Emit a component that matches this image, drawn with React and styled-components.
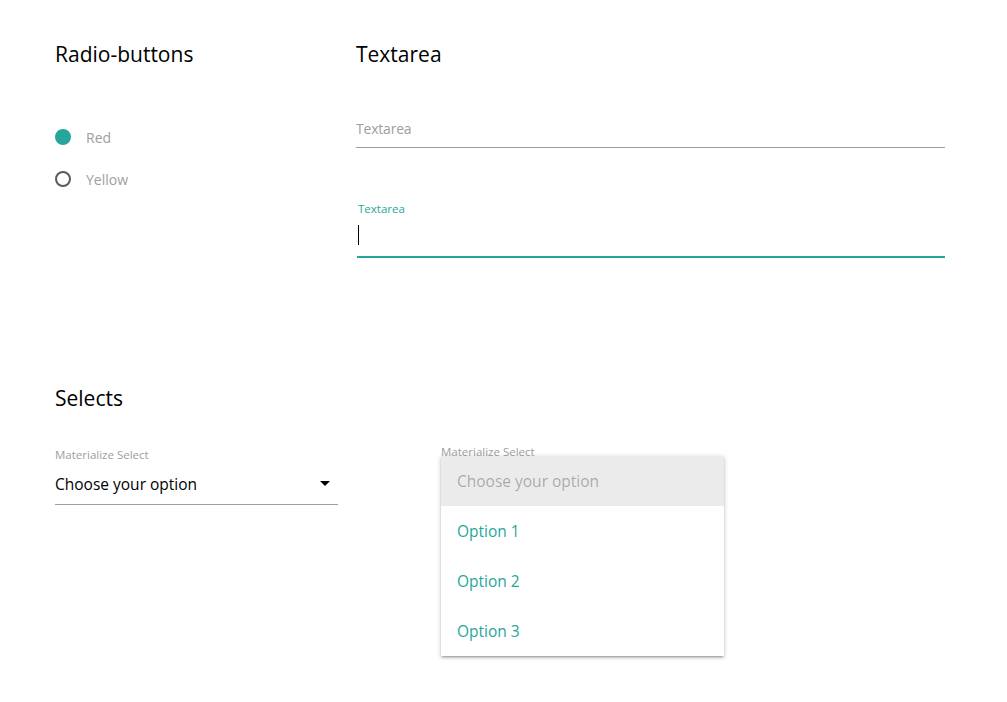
import React from 'react';
import styled, { createGlobalStyle } from 'styled-components';

const TEAL = '#26a69a';

const Global = createGlobalStyle`
  body { margin: 0; background: #fff; font-family: "Open Sans", "Noto Sans", sans-serif; color: #000; }
`;

const Page = styled.div`
  padding: 39px 0 0 55px;
  min-height: 702px;
  box-sizing: border-box;
`;

const TopRow = styled.div`
  display: flex;
  gap: 16px;
`;

const Column = styled.section`
  flex: none;
  width: ${(p) => p.$w}px;
`;

const Heading = styled.h2`
  margin: 0;
  font-size: 21px;
  font-weight: 400;
  line-height: 30px;
  color: #000;
`;

const RadioList = styled.div`
  display: flex;
  flex-direction: column;
  gap: 20px;
  margin-top: 57px;
`;

const RadioRow = styled.label`
  display: flex;
  align-items: center;
  gap: 15px;
  font-size: 14px;
  color: #9e9e9e;
  height: 22px;
`;

const Dot = styled.span`
  width: 16px;
  height: 16px;
  box-sizing: border-box;
  border-radius: 50%;
  background: ${(p) => (p.$on ? TEAL : 'transparent')};
  border: 2px solid ${(p) => (p.$on ? TEAL : '#5a5a5a')};
`;

const Field = styled.div`
  margin-top: ${(p) => p.$mt}px;
`;

const PlainArea = styled.div`
  font-size: 14px;
  letter-spacing: -0.2px;
  color: #9e9e9e;
  padding-bottom: 8px;
  border-bottom: 1px solid #9e9e9e;
  line-height: 20px;
`;

const SmallLabel = styled.div`
  font-size: 11.5px;
  line-height: 16px;
  color: ${(p) => p.$c || '#9e9e9e'};
  padding-left: ${(p) => p.$pl || 0}px;
`;

const ActiveArea = styled.div`
  margin-left: 1px;
  height: 41px;
  border-bottom: 2px solid ${TEAL};
  display: flex;
  align-items: flex-start;
  box-sizing: border-box;
`;

const Caret = styled.span`
  margin-left: 1px;
  margin-top: 8px;
  width: 1px;
  height: 20px;
  background: #000;
`;

const SelectsHead = styled.div`
  margin-top: 125px;
`;

const SelectRow = styled.div`
  display: grid;
  grid-template-columns: 283px 283px;
  gap: 103px;
  margin-top: 34px;
`;

const SelectWrap = styled.div`
  position: relative;
  margin-top: ${(p) => p.$mt || 0}px;
`;

const SelectBox = styled.div`
  display: flex;
  align-items: center;
  justify-content: space-between;
  height: 41px;
  font-size: 15.5px;
  color: #000;
  border-bottom: 1px solid #9e9e9e;
`;

const Arrow = styled.svg`
  width: 10px;
  height: 5px;
  margin-right: 8px;
`;

const Dropdown = styled.ul`
  position: absolute;
  top: 12px;
  left: 0;
  width: 283px;
  margin: 0;
  padding: 0;
  list-style: none;
  background: #fff;
  box-shadow: 0 2px 2px 0 rgba(0,0,0,0.14), 0 3px 1px -2px rgba(0,0,0,0.12), 0 1px 5px 0 rgba(0,0,0,0.2);
`;

const Option = styled.li`
  height: 50px;
  display: flex;
  align-items: center;
  padding-left: 16px;
  font-size: 15.5px;
  color: ${(p) => (p.$disabled ? 'rgba(0,0,0,0.3)' : TEAL)};
  background: ${(p) => (p.$disabled ? '#ebebeb' : '#fff')};
`;

export default function App() {
  return (
    <>
      <Global />
      <Page>
        <TopRow>
          <Column $w={285}>
            <Heading>Radio-buttons</Heading>
            <RadioList>
              <RadioRow><Dot $on />Red</RadioRow>
              <RadioRow><Dot />Yellow</RadioRow>
            </RadioList>
          </Column>
          <Column $w={589}>
            <Heading>Textarea</Heading>
            <Field $mt={50}>
              <PlainArea>Textarea</PlainArea>
            </Field>
            <Field $mt={53}>
              <SmallLabel $c={TEAL} $pl={2}>Textarea</SmallLabel>
              <ActiveArea><Caret /></ActiveArea>
            </Field>
          </Column>
        </TopRow>
        <SelectsHead>
          <Heading>Selects</Heading>
        </SelectsHead>
        <SelectRow>
          <SelectWrap>
            <SmallLabel>Materialize Select</SmallLabel>
            <SelectBox>
              Choose your option
              <Arrow viewBox="0 0 10 5"><path d="M0 0 L10 0 L5 5 Z" fill="#000" /></Arrow>
            </SelectBox>
          </SelectWrap>
          <SelectWrap $mt={-3}>
            <SmallLabel>Materialize Select</SmallLabel>
            <Dropdown>
              <Option $disabled>Choose your option</Option>
              <Option>Option 1</Option>
              <Option>Option 2</Option>
              <Option>Option 3</Option>
            </Dropdown>
          </SelectWrap>
        </SelectRow>
      </Page>
    </>
  );
}
